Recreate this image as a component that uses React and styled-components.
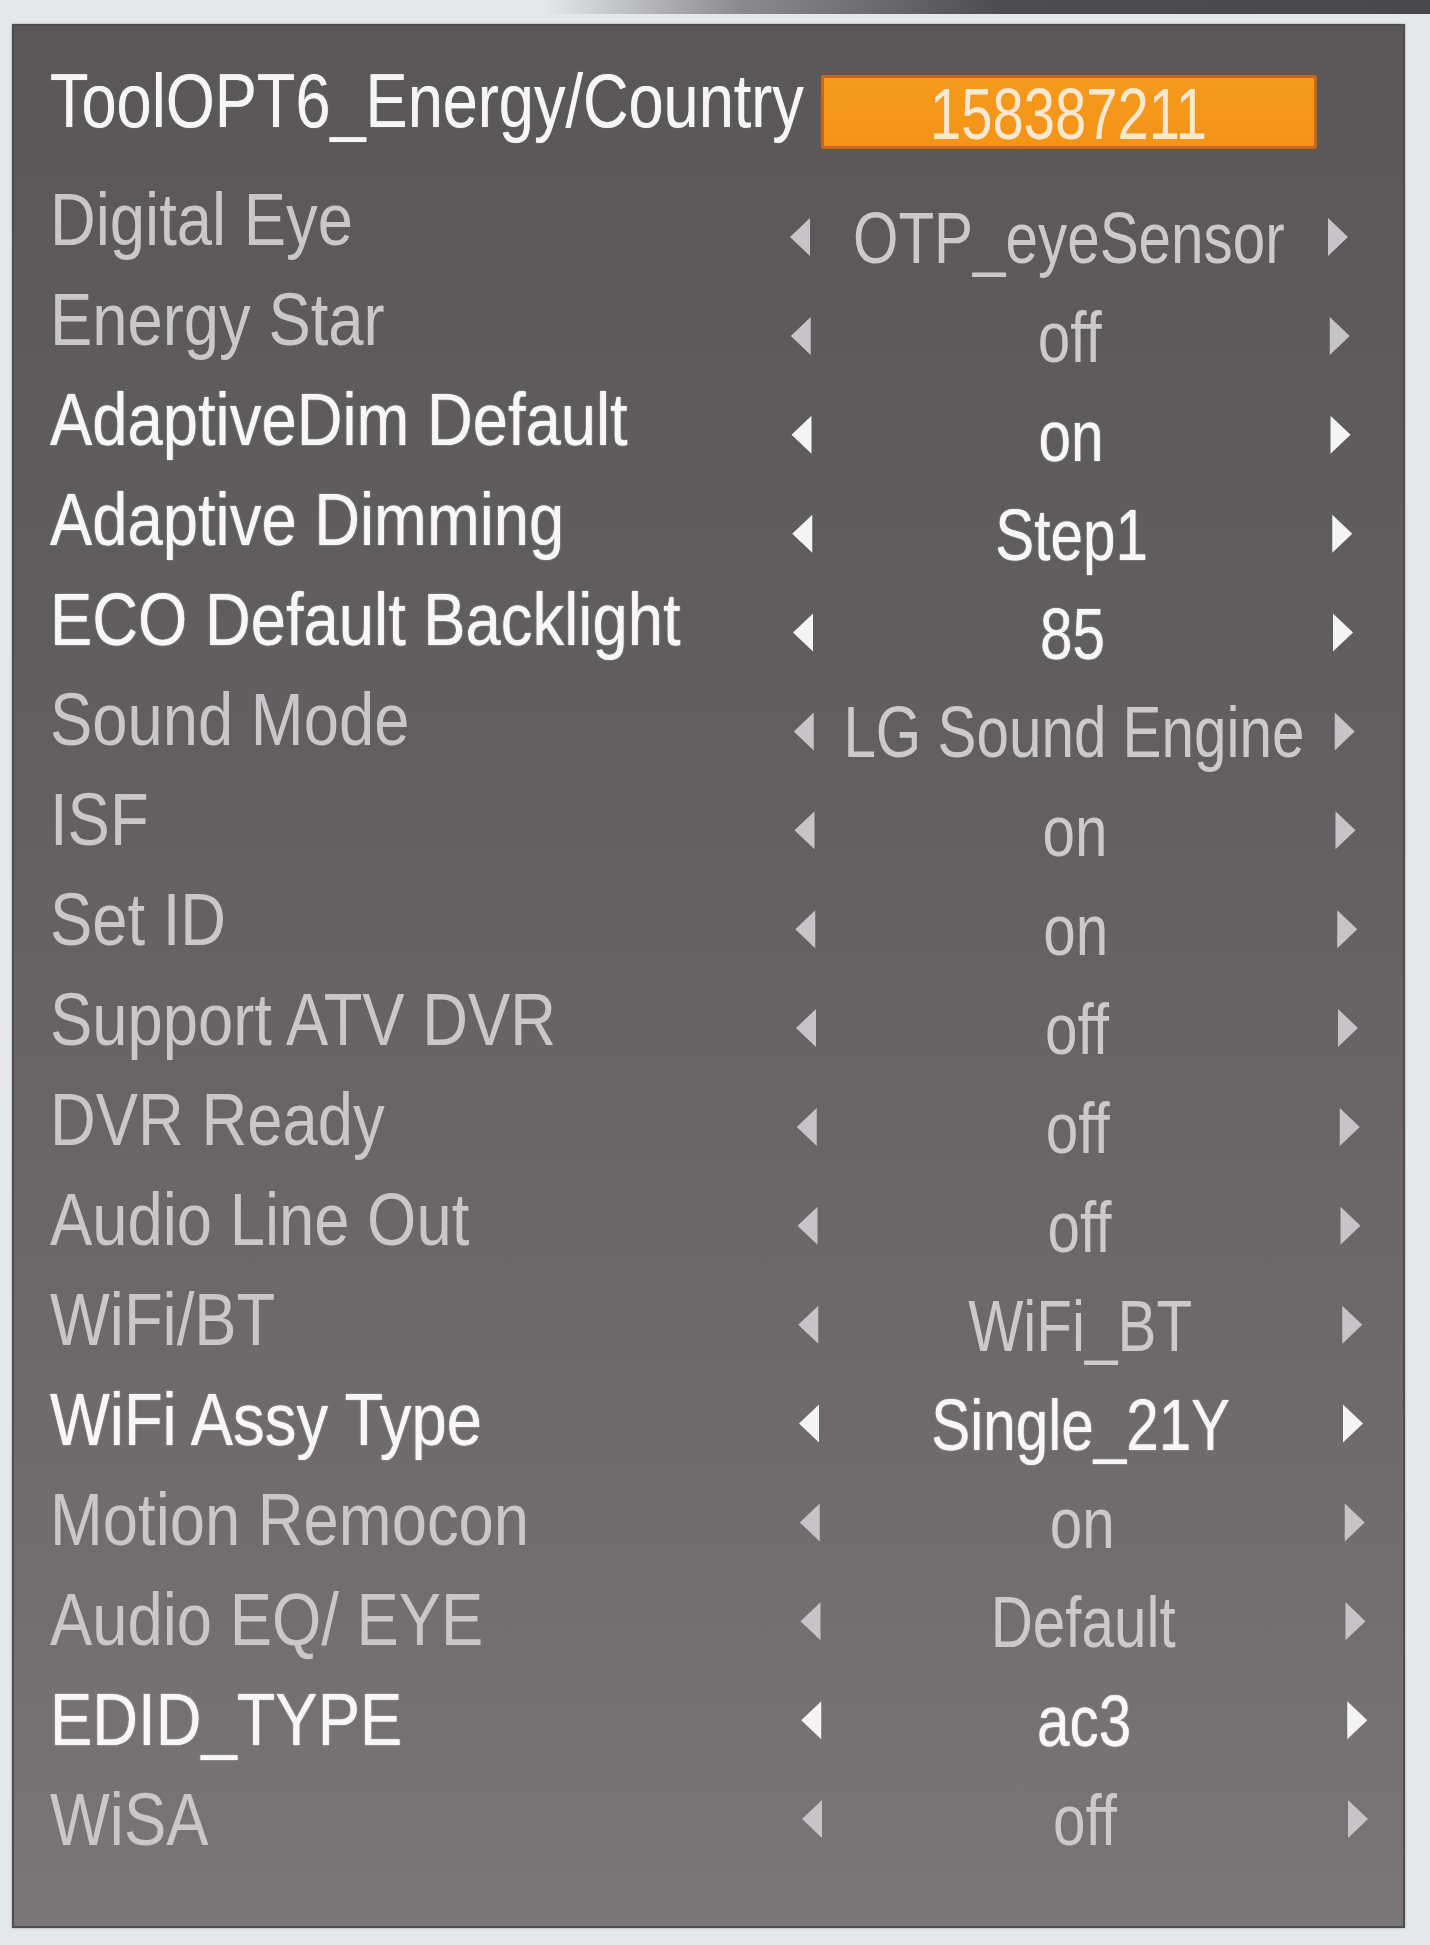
import React from 'react';
import styled, { createGlobalStyle } from 'styled-components';

const GlobalStyle = createGlobalStyle`
  html, body {
    margin: 0;
    padding: 0;
    background: #e5e7e8;
  }
  body {
    font-family: "Liberation Sans", Arial, sans-serif;
  }
`;

const rows = [
  ['Digital Eye', 'OTP_eyeSensor', false],
  ['Energy Star', 'off', false],
  ['AdaptiveDim Default', 'on', true],
  ['Adaptive Dimming', 'Step1', true],
  ['ECO Default Backlight', '85', true],
  ['Sound Mode', 'LG Sound Engine', false],
  ['ISF', 'on', false],
  ['Set ID', 'on', false],
  ['Support ATV DVR', 'off', false],
  ['DVR Ready', 'off', false],
  ['Audio Line Out', 'off', false],
  ['WiFi/BT', 'WiFi_BT', false],
  ['WiFi Assy Type', 'Single_21Y', true],
  ['Motion Remocon', 'on', false],
  ['Audio EQ/ EYE', 'Default', false],
  ['EDID_TYPE', 'ac3', true],
  ['WiSA', 'off', false],
];

export default function App() {
  const last = rows.length - 1;
  return (
    <Page>
      <GlobalStyle />
      <TopStrip />
      <Panel>
        <Header>
          <Title>ToolOPT6_Energy/Country</Title>
          <CodeBox>
            <CodeText>158387211</CodeText>
          </CodeBox>
        </Header>
        <List>
          {rows.map(([label, value, active], i) => (
            <Row key={label}>
              <Label $active={active}>{label}</Label>
              <Selector
                $dx={(12 * i) / last}
                $dy={18 * (1 - i / last)}
                $grow={(8 * i) / last}
              >
                <Arrow $dir="left" $active={active} />
                <ValueSlot>
                  <Value $active={active}>{value}</Value>
                </ValueSlot>
                <Arrow $dir="right" $active={active} />
              </Selector>
            </Row>
          ))}
        </List>
      </Panel>
    </Page>
  );
}

const Page = styled.div`
  min-height: 1945px;
  background: #e5e7e8;
  overflow: hidden;
`;

const TopStrip = styled.div`
  height: 14px;
  background: linear-gradient(to right, #e5e7e8 38%, #8a8a8c 52%, #4d4c4e 70%, #48484a 100%);
`;

const Panel = styled.div`
  box-sizing: border-box;
  margin: 10px 0 0 12px;
  width: 1393px;
  height: 1904px;
  padding: 25px 0 0 36px;
  background: linear-gradient(to bottom, #5a5759 0%, #625f61 40%, #6f6b6d 75%, #7a7678 100%);
  border: 2px solid #4f4c4e;
  box-shadow: 0 0 2px rgba(0, 0, 0, 0.35);
`;

const Header = styled.div`
  display: grid;
  grid-template-columns: 771px 496px;
  align-items: center;
  height: 100px;
`;

const Title = styled.div`
  font-size: 76px;
  line-height: 1;
  color: #f6f6f6;
  white-space: nowrap;
  transform: scaleX(0.83);
  transform-origin: left center;
  text-shadow: 0 0 1px rgba(255, 255, 255, 0.6);
`;

const CodeBox = styled.div`
  box-sizing: border-box;
  height: 74px;
  margin-top: 22px;
  display: flex;
  align-items: center;
  justify-content: center;
  background: linear-gradient(to bottom, #f59a1e, #f39417);
  border: 3px solid #c8671a;
  border-radius: 2px;
  padding-top: 4px;
`;

const CodeText = styled.span`
  font-size: 72px;
  line-height: 1;
  color: #fbe8d2;
  transform: scaleX(0.78);
`;

const List = styled.div`
  display: flex;
  flex-direction: column;
  margin-top: 18px;
`;

const Row = styled.div`
  display: grid;
  grid-template-columns: 735px 568px;
  align-items: center;
  height: 100px;
`;

const Label = styled.div`
  font-size: 75px;
  line-height: 1;
  white-space: nowrap;
  transform: scaleX(0.845);
  transform-origin: left center;
  color: ${(p) => (p.$active ? '#f7f7f7' : '#c9c7c9')};
  text-shadow: ${(p) => (p.$active ? '0 0 1.5px rgba(255,255,255,0.85)' : 'none')};
`;

const Selector = styled.div`
  display: flex;
  align-items: center;
  width: calc(100% + ${(p) => p.$grow}px);
  transform: translate(${(p) => p.$dx}px, ${(p) => p.$dy}px);
`;

const ValueSlot = styled.div`
  flex: 1;
  min-width: 0;
  display: flex;
  justify-content: center;
`;

const Value = styled.span`
  flex-shrink: 0;
  font-size: 73px;
  line-height: 1;
  white-space: nowrap;
  transform: scaleX(0.8);
  color: ${(p) => (p.$active ? '#f7f7f7' : '#cbc9cb')};
  text-shadow: ${(p) => (p.$active ? '0 0 1.5px rgba(255,255,255,0.85)' : 'none')};
`;

const Arrow = styled.span`
  display: block;
  flex-shrink: 0;
  width: 0;
  height: 0;
  margin: 0 5px;
  border-top: 19px solid transparent;
  border-bottom: 19px solid transparent;
  ${(p) =>
    p.$dir === 'left'
      ? `border-right: 20px solid ${p.$active ? '#f4f4f4' : '#c6c4c6'};`
      : `border-left: 20px solid ${p.$active ? '#f4f4f4' : '#c6c4c6'};`}
`;
